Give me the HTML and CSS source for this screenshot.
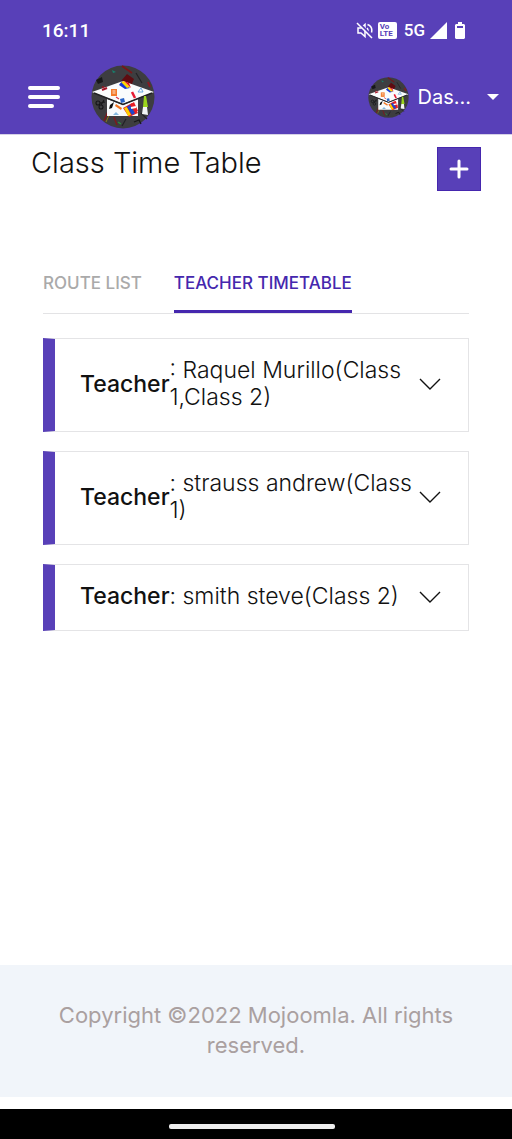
FILE: index.html
```html
<!DOCTYPE html>
<html lang="en">
<head>
<meta charset="utf-8">
<meta name="viewport" content="width=device-width, initial-scale=1">
<title>Class Time Table</title>
<link rel="stylesheet" href="styles.css">
</head>
<body>
<svg class="sprite" aria-hidden="true">
  <symbol id="school-logo" viewBox="0 0 64 64">
    <circle cx="32" cy="32" r="31.5" fill="#3d3d40"/>
    <path d="M36 9l7 5-3 7-10-5z" fill="#5e0b10"/>
    <path d="M31 1l10 7" stroke="#7c1418" stroke-width="1.6"/>
    <path d="M45 8l6 10M50 48l6 6M35 54l-4 7" stroke="#222225" stroke-width="1.2"/>
    <path d="M21 5l4 2-3 1z" fill="#17806c"/>
    <path d="M5 15l6-3 1 5-5 2z" fill="#17171a"/>
    <path d="M57 17l2 5M11 22l7 2" stroke="#8a1820" stroke-width="2"/>
    <g fill="none" stroke="#151517" stroke-width="1.1"><circle cx="7" cy="38" r="2"/><circle cx="10" cy="42" r="2"/><path d="M9 38l5-1M10 40l3-5"/></g>
    <path d="M18 44l-5 12M23 52l3 8" stroke="#7c1a1c" stroke-width="1.5"/>
    <path d="M20 46l-5 11" stroke="#8a7a18"/>
    <path d="M27 57l3 2" stroke="#2b8f3c" stroke-width="1.3"/>
    <path d="M43 57l5-2 2 4" fill="none" stroke="#171719" stroke-width="1.3"/>
    <path d="M16 34l16 6 15-6v17H16z" fill="#f7fafc"/>
    <path d="M32 16L63 27 32 39 1 27z" fill="#fafcfd"/>
    <path d="M3 28l29 11.500L61 28" fill="none" stroke="#222225" stroke-width="1.5"/>
    <path d="M28 20l3-4 8 7-5 1z" fill="#1438d8"/>
    <path d="M30 17l3-1 6 6-3 1z" fill="#ffd800"/>
    <path d="M33 16l5 2 2 5z" fill="#e3161c"/>
    <path d="M20 24h6v7h-6z" fill="#f47b2c"/><path d="M21.500 26h3M21.500 28h3" stroke="#fff" stroke-width=".8"/>
    <path d="M11 25l5-2" stroke="#a51428" stroke-width="2"/>
    <path d="M41 27l3 6" stroke="#e51c35" stroke-width="2.500"/>
    <path d="M47 27l3-4 2 4z" fill="none" stroke="#68a7dc" stroke-width="1"/>
    <path d="M29 34l4-1 1 4-4 1z" fill="#2864c8"/>
    <path d="M25 32l3 2" stroke="#dc3348" stroke-width="1.2"/>
    <path d="M19 40l4-3-2 6-3 1z" fill="#111"/>
    <path d="M25 39l6 4-1 2-6-4z" fill="#f27520"/>
    <path d="M22 50l3-3 3 3z" fill="#83b8e0"/>
    <path d="M32 43l9-5 6 10-9 4z" fill="#e32224"/>
    <path d="M33 43l3-1 4 8-3 1z" fill="#ffd000"/>
    <path d="M36 42l3-2 5 8-3 2z" fill="#1c48cc"/>
    <path d="M40 39l3-2 4 9-3 1z" fill="#e91d25"/>
    <path d="M40 43l5-1" stroke="#fff" stroke-width="2"/>
    <path d="M53 31h2l2 11h-5z" fill="#9bd51c"/>
    <path d="M52 42h4l1 8-6-1z" fill="#f3f5f6"/>
  </symbol>
  <symbol id="chevron" viewBox="0 0 22 12">
    <path d="M1 1l10 10L21 1" fill="none" stroke="#111" stroke-width="1.4"/>
  </symbol>
</svg>

<div class="status">
  <span>16:11</span>
  <div class="status-icons">
    <svg width="17" height="17" viewBox="0 0 17 17" fill="none" stroke="#fff" stroke-width="1.5">
      <path d="M2 6h3l4-3.500v12L5 11H2zM11 6q2 2.500 0 5M11.500 2.500q5.500 2 4 8"/>
      <path d="M2.500.5l14 14" stroke="#5840b8" stroke-width="2"/><path d="M1 1l15 15"/>
    </svg>
    <span class="volte"><span>Vo</span><span>LTE</span></span>
    <span class="net">5G</span>
    <svg width="17" height="17" viewBox="0 0 17 17"><path d="M17 0v17H0z" fill="#fff"/></svg>
    <svg class="battery" width="10" height="17" viewBox="0 0 10 17"><path d="M3 0h4v2h2l1 1v13l-1 1H1l-1-1V3l1-1h2z" fill="#fff"/><path d="M2 4h6v2H2z" fill="#5840b8"/></svg>
  </div>
</div>

<header class="topbar">
  <button class="menu" type="button" aria-label="Menu">
    <svg width="32" height="24" viewBox="0 0 32 24" stroke="#fff" stroke-width="4" stroke-linecap="round"><path d="M2 3h28M2 12h28M2 21h22"/></svg>
  </button>
  <a href="#" aria-label="Home"><svg class="logo"><use href="#school-logo"/></svg></a>
  <button class="account" type="button">
    <svg class="avatar" aria-hidden="true"><use href="#school-logo"/></svg>
    <span>Das...</span>
    <svg class="caret" width="12" height="6" viewBox="0 0 12 6"><path d="M0 0h12L6 6z" fill="#fff"/></svg>
  </button>
</header>

<main class="page">
  <div class="heading">
    <h1>Class Time Table</h1>
    <button class="add" type="button" aria-label="Add">
      <svg width="20" height="20" viewBox="0 0 20 20" stroke="#fff" stroke-width="3" stroke-linecap="round"><path d="M10 2v16M2 10h16"/></svg>
    </button>
  </div>
  <div class="content">
    <nav class="tabs">
      <a href="#">ROUTE LIST</a>
      <a href="#" class="active" aria-current="page">TEACHER TIMETABLE</a>
    </nav>
    <div class="cards">
      <button class="card" type="button" aria-expanded="false"><strong>Teacher</strong><span class="who">: Raquel Murillo(Class 1,Class 2)</span><svg class="chevron"><use href="#chevron"/></svg></button>
      <button class="card" type="button" aria-expanded="false"><strong>Teacher</strong><span class="who">: strauss andrew(Class 1)</span><svg class="chevron"><use href="#chevron"/></svg></button>
      <button class="card" type="button" aria-expanded="false"><strong>Teacher</strong><span class="who">: smith steve(Class 2)</span><svg class="chevron"><use href="#chevron"/></svg></button>
    </div>
  </div>
</main>

<footer class="footer">Copyright ©2022 Mojoomla. All rights reserved.</footer>
<div class="gesture"><span></span></div>
</body>
</html>
```
FILE: styles.css
```css
* { box-sizing: border-box; }
body {
  margin: 0;
  min-height: 100vh;
  display: flex;
  flex-direction: column;
  background: #fff;
  color: #111;
  font-family: Inter, "Open Sans", sans-serif;
}
button {
  border: 0;
  padding: 0;
  background: none;
  color: inherit;
  font: inherit;
  cursor: pointer;
}
a { color: inherit; text-decoration: none; }
svg { display: block; flex: none; }
.sprite { position: absolute; width: 0; height: 0; }

.status {
  display: flex;
  align-items: center;
  justify-content: space-between;
  height: 60px;
  padding: 0 47px 0 42px;
  background: #5840b8;
  color: #fff;
  font: 500 19px Roboto, sans-serif;
}
.status-icons { display: flex; align-items: center; gap: 5px; }
.volte {
  display: flex;
  flex-direction: column;
  width: 19px;
  height: 17px;
  padding: 1px 2px;
  border-radius: 2px;
  background: #fff;
  color: #5840b8;
  font-size: 8px;
  font-weight: 700;
  line-height: 7px;
}
.net { padding-left: 2px; font-size: 17px; }
.battery { margin-left: 3px; }

.topbar {
  display: flex;
  align-items: center;
  height: 75px;
  padding: 0 13px 0 28px;
  background: #5840b8;
  border-bottom: 1px solid #d5d1e6;
  color: #fff;
}
.menu { margin-right: 31px; }
.logo { width: 64px; height: 64px; }
.account {
  display: flex;
  align-items: center;
  gap: 8px;
  margin-left: auto;
  font-size: 20px;
  font-weight: 400;
}
.avatar { width: 41px; height: 41px; }
.caret { margin-left: 8px; }

.page { flex: 1; }
.heading {
  display: flex;
  justify-content: space-between;
  align-items: flex-start;
  padding: 12px 31px 0;
}
h1 {
  margin: 0;
  font-size: 29px;
  font-weight: 300;
  line-height: 32px;
}
.add {
  display: grid;
  place-items: center;
  width: 44px;
  height: 44px;
  background: #5840b8;
  border: 1px solid #4527ae;
}
.content { padding: 68px 43px 24px; }
.tabs {
  display: flex;
  gap: 32px;
  border-bottom: 1px solid #e3e3e5;
  color: #aaa;
  font-size: 17px;
  font-weight: 500;
  line-height: 24px;
}
.tabs a { padding: 12px 0 15px; border-bottom: 3px solid transparent; white-space: nowrap; }
.tabs .active { color: #4527ae; border-color: #4527ae; }
.cards {
  display: flex;
  flex-direction: column;
  gap: 19px;
  margin-top: 24px;
}
.card {
  display: flex;
  align-items: center;
  padding: 18px 27px 20px 25px;
  border: 1px solid #e4e4e6;
  border-left: 12px solid #5840b8;
  text-align: left;
  font-size: 23px;
  font-weight: 300;
  line-height: 27px;
}
.card strong { font-weight: 500; }
.who { flex: 1; }
.chevron { width: 22px; height: 12px; }

.footer {
  padding: 35px 48px 37px;
  background: #f1f5fa;
  color: #aaa0a0;
  text-align: center;
  font-size: 22px;
  line-height: 30px;
}
.gesture {
  display: flex;
  justify-content: center;
  align-items: flex-end;
  height: 30px;
  margin-top: 12px;
  padding: 0 8px 10px 0;
  background: #000;
}
.gesture span { width: 33%; height: 5px; border-radius: 2px; background: #eee; }
```
